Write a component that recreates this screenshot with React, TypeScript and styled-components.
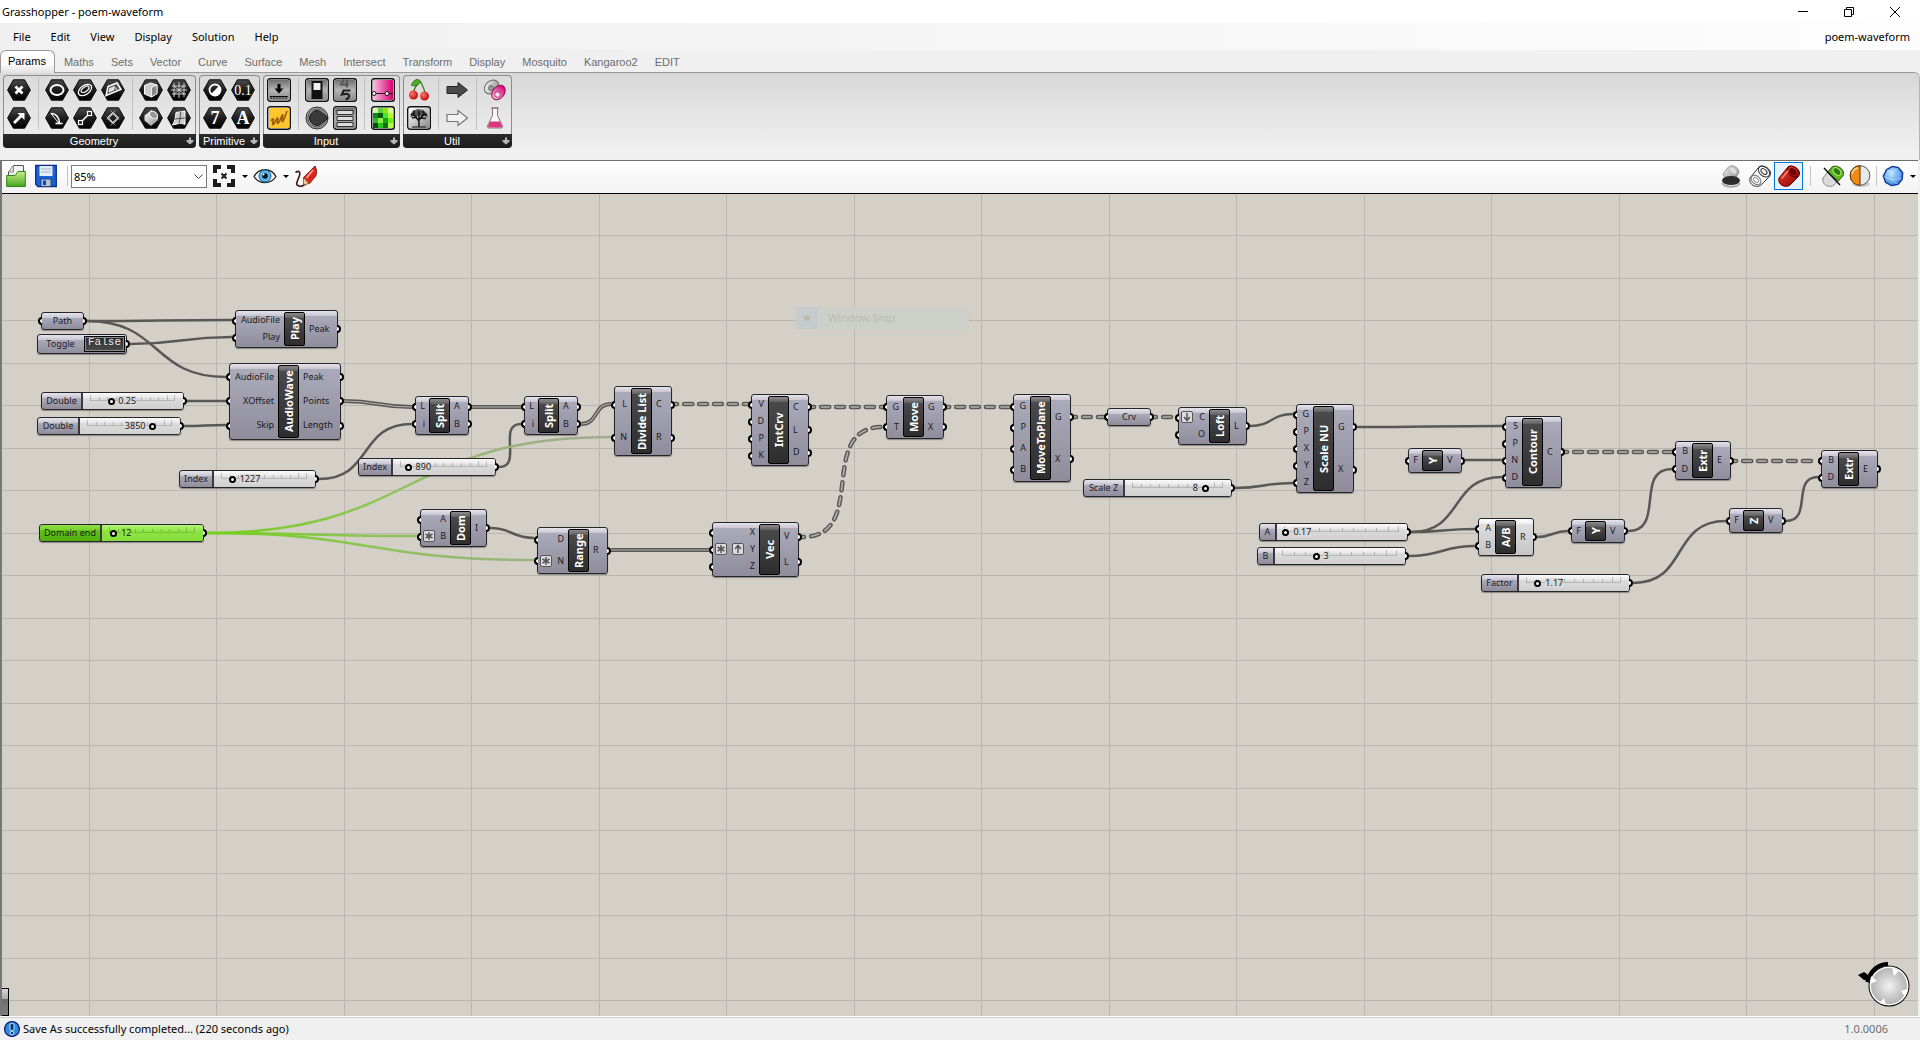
import React, { useState } from "react";
import styled, { createGlobalStyle, css } from "styled-components";

const UI = `"Noto Sans", "Open Sans", sans-serif`;
const RIBBON = `"Liberation Sans", Arial, sans-serif`;
const NODE = `"Noto Sans", "Open Sans", sans-serif`;

const GlobalStyle = createGlobalStyle`
  * { box-sizing: border-box; }
  body { margin: 0; background: #f0f0f0; font-family: ${UI}; font-size: 11px; color: #000; }
  button { font: inherit; color: inherit; background: none; border: 0; padding: 0; margin: 0; }
  svg { display: block; }
`;

const Window = styled.div`
  display: flex;
  flex-direction: column;
  height: 100vh;
  overflow: hidden;
`;

/* ---------- title bar and menu ---------- */

const TitleBar = styled.header`
  display: flex;
  align-items: center;
  height: 23px;
  flex: none;
  padding: 0 2px;
  background: #fff;
`;
const Title = styled.h1`
  flex: 1;
  margin: 0;
  font-size: 11px;
  line-height: 20px;
  font-weight: 400;
`;
const WindowButton = styled.button`
  display: grid;
  place-items: center;
  width: 46px;
  height: 20px;
`;
const MenuBar = styled.nav`
  display: flex;
  align-items: center;
  height: 27px;
  flex: none;
  padding: 0 10px 0 3px;
  background: linear-gradient(90deg, #f0f0f0, #f4f4f4 40%, #fdfdfd);
`;
const MenuItem = styled.button`
  padding: 0 10px;
  line-height: 20px;
`;
const DocumentName = styled.button`
  margin-left: auto;
  line-height: 20px;
`;

/* ---------- ribbon ---------- */

const Tabs = styled.div`
  display: flex;
  gap: 1px;
  height: 23px;
  flex: none;
  position: relative;
  z-index: 1;
  font-family: ${RIBBON};
`;
const Tab = styled.button<{ $active?: boolean }>`
  padding: 1px 8px 0;
  line-height: 22px;
  color: #6c6c6c;
  ${(p) =>
    p.$active &&
    css`
      padding: 0 8px 2px 7px;
      line-height: 20px;
      color: #000;
      background: linear-gradient(#fff, #fafafa 60%, #e2e2e2);
      border: 1px solid #9b9b9b;
      border-bottom: 0;
      border-radius: 6px 6px 0 0;
    `}
`;
const Ribbon = styled.div`
  display: flex;
  align-items: flex-start;
  gap: 3px;
  height: 88px;
  flex: none;
  margin-top: -1px;
  padding: 2px 3px 0;
  border-top: 1px solid #999;
  border-right: 1px solid #b4b4b4;
  border-radius: 0 6px 0 0;
  background: linear-gradient(#d8d8d8, #f0f0f0 90%);
`;
const Group = styled.section`
  display: flex;
  flex-direction: column;
  border: 1px solid #8c8c8c;
  border-bottom: 0;
  border-radius: 4px;
  background: linear-gradient(#dadada, #efefef);
`;
const Sections = styled.div`
  display: flex;
  padding: 2px 4px 4px 3px;
`;
const Section = styled.div<{ $cols: number }>`
  display: grid;
  grid-template-columns: repeat(${(p) => p.$cols}, 24px);
  gap: 4px;
  & + & {
    margin-left: 7px;
    padding-left: 6px;
    border-left: 1px solid #c0c0c0;
  }
`;
const ToolButton = styled.button`
  width: 24px;
  height: 24px;
`;
const GroupLabel = styled.div`
  display: flex;
  align-items: center;
  justify-content: center;
  height: 14px;
  margin: 0 -1px;
  padding: 0 0 0 1px;
  border-radius: 0 0 4px 4px;
  background: linear-gradient(#2c2c2c, #1c1c1c);
  color: #fff;
  font-family: ${RIBBON};
  font-size: 11px;
  line-height: 13px;
`;
const GroupName = styled.span`
  flex: 1;
  text-align: center;
`;

/* ---------- canvas toolbar ---------- */

const Editor = styled.main`
  display: flex;
  flex-direction: column;
  flex: 1;
  min-height: 0;
  margin-right: 2px;
  border-left: 2px solid #77777b;
  border-top: 1px solid #6e6e6e;
`;
const Toolbar = styled.div`
  display: flex;
  align-items: center;
  height: 33px;
  flex: none;
  padding: 0 0 2px 2px;
  border-bottom: 1px solid #000;
  background: linear-gradient(#fff, #f2f2f2);
`;
const BarButton = styled.button<{ $active?: boolean }>`
  display: grid;
  place-items: center;
  width: 29px;
  height: 28px;
  border: 1px solid ${(p) => (p.$active ? "#0078d7" : "transparent")};
  background: ${(p) => (p.$active ? "#e9f1fa" : "none")};
`;
const FileButton = styled(BarButton)`
  width: 24px;
  margin-right: 6px;
`;
const DropButton = styled(BarButton)`
  width: 26px;
`;
const Caret = styled.button`
  width: 9px;
  height: 20px;
  display: grid;
  place-items: center;
  margin: 0 1px 0 2px;
  &::after {
    content: "";
    border: 3px solid transparent;
    border-top-color: #000;
    border-bottom: 0;
  }
`;
const BarDivider = styled.span<{ $gap: number }>`
  width: 1px;
  height: 20px;
  margin: 0 ${(p) => p.$gap}px;
  background: #c4c4c4;
`;
const ZoomBox = styled.div`
  position: relative;
  width: 136px;
  margin-right: 2px;
`;
const ZoomSelect = styled.select`
  width: 100%;
  height: 23px;
  padding: 0 2px;
  appearance: none;
  border: 1px solid #7a7a7a;
  border-radius: 0;
  background: #fff;
  font-family: ${UI};
  font-size: 11px;
  color: #000;
`;
const ZoomArrow = styled.svg`
  position: absolute;
  right: 4px;
  top: 9px;
  pointer-events: none;
`;
const Spacer = styled.span`
  flex: 1;
`;

/* ---------- canvas ---------- */

const Canvas = styled.div`
  position: relative;
  flex: 1;
  overflow: hidden;
  background-color: #d4d0c8;
  background-image:
    linear-gradient(90deg, #bab7b0 1px, transparent 1px),
    linear-gradient(90deg, #bab7b0 1px, transparent 1px),
    linear-gradient(#bab7b0 1px, transparent 1px),
    linear-gradient(#bab7b0 1px, transparent 1px);
  background-size: 255px 100%, 255px 100%, 100% 85px, 100% 85px;
  background-position: 87px 0, 214px 0, 0 41px, 0 84px;
`;
/* The document plane, panned so that its origin lies above the toolbar. */
const Plane = styled.div`
  position: absolute;
  inset: -194px 0 0 -2px;
  font-family: ${NODE};
  font-size: 9px;
  line-height: 12px;
`;
const Wires = styled.svg`
  position: absolute;
  inset: 0;
  width: 100%;
  height: 100%;
`;

type Tone = "grey" | "white" | "green";
const tones: Record<Tone, string> = {
  grey: "linear-gradient(#e6e5ee 0, #c6c5d0 5px, #abaaba 5px, #8f8d9b 100%)",
  white: "linear-gradient(#ffffff 0, #ececec 5px, #dedede 5px, #c4c4c4 100%)",
  green: "linear-gradient(#8fe04a 0, #78d42c 5px, #62c318 5px, #4fb00c 100%)",
};

const NodeBox = styled.div<{ $x: number; $y: number; $w: number; $h: number; $tone?: Tone }>`
  position: absolute;
  left: ${(p) => p.$x}px;
  top: ${(p) => p.$y}px;
  width: ${(p) => p.$w}px;
  height: ${(p) => p.$h}px;
  display: flex;
  border: 1px solid #26262a;
  border-radius: 3px;
  background: ${(p) => tones[p.$tone ?? "grey"]};
  box-shadow: 0 1px 1px rgba(0, 0, 0, 0.35);
  color: #1a1a1e;
`;
const Ports = styled.ul<{ $w?: number; $out?: boolean }>`
  ${(p) => (p.$w ? `width: ${p.$w}px;` : "flex: 1;")}
  display: flex;
  flex-direction: column;
  margin: 0;
  padding: 1px 0;
  list-style: none;
`;
const Port = styled.li<{ $out?: boolean }>`
  position: relative;
  flex: 1;
  display: flex;
  align-items: center;
  justify-content: ${(p) => (p.$out ? "flex-start" : "flex-end")};
  padding: 0 4px 1px;
  white-space: nowrap;
`;
const Badges = styled.span`
  flex: 1;
  display: flex;
  gap: 5px;
  margin-left: -2px;
`;
const Badge = styled.span`
  display: grid;
  place-items: center;
  width: 12px;
  height: 12px;
  border: 1px solid #55555a;
  border-radius: 2px;
  background: #dcdcdc;
`;
const Grip = styled.i<{ $side: "left" | "right" }>`
  position: absolute;
  top: 50%;
  margin-top: -4px;
  width: 4px;
  height: 8px;
  border: 2px solid #000;
  background: #fff;
  ${(p) =>
    p.$side === "left"
      ? "left: -4px; border-right: 0; border-radius: 4px 0 0 4px;"
      : "right: -4px; border-left: 0; border-radius: 0 4px 4px 0;"}
`;
const NodeTitle = styled.strong`
  width: 21px;
  margin: 1px 0;
  border: 1px solid #000;
  border-radius: 2px;
  display: flex;
  align-items: center;
  justify-content: center;
  writing-mode: vertical-rl;
  transform: rotate(180deg);
  background: linear-gradient(0deg, #8c8c8c 0, #5e5e5e 5px, #4a4a4a 5px, #2d2d2d 100%);
  color: #fff;
  font-size: 11px;
  line-height: 16px;
  white-space: nowrap;
`;
const ParamName = styled.span`
  flex: 1;
  align-self: center;
  text-align: center;
  line-height: 16px;
`;

const SliderName = styled.label<{ $w: number }>`
  width: ${(p) => p.$w}px;
  flex: none;
  border-right: 2px solid #3a3a3e;
  text-align: center;
  line-height: 16px;
  white-space: nowrap;
`;
const SliderBody = styled.div<{ $green?: boolean }>`
  flex: 1;
  padding: 0 8px 0 7px;
  border-radius: 0 2px 2px 0;
  --face: ${(p) => (p.$green ? "#8ae340" : "#d8d8d8")};
  background: ${(p) =>
    p.$green
      ? "linear-gradient(#b6f57c 0, #97ea4e 5px, #8fe645 5px, #84dd3a 100%)"
      : "linear-gradient(#fbfbfb 0, #e6e6e6 5px, #dcdcdc 5px, #d0d0d0 100%)"};
`;
const SliderTrack = styled.div`
  position: relative;
  height: 16px;
`;
const Ticks = styled.div`
  display: grid;
  grid-template-columns: repeat(10, 1fr);
  align-items: end;
  height: 8px;
  border-bottom: 1px solid rgba(0, 0, 0, 0.16);
`;
const Tick = styled.i`
  height: 3px;
  border-left: 1px solid rgba(0, 0, 0, 0.2);
  &:first-child {
    height: 5px;
  }
  &:last-child {
    height: 5px;
    border-right: 1px solid rgba(0, 0, 0, 0.2);
  }
`;
const Range = styled.input`
  position: absolute;
  left: -4px;
  top: 0;
  width: calc(100% + 8px);
  height: 16px;
  margin: 0;
  appearance: none;
  background: none;
  &::-webkit-slider-thumb {
    appearance: none;
    width: 7px;
    height: 7px;
    border: 2px solid #000;
    border-radius: 50%;
    background: #fff;
  }
`;
const Value = styled.output<{ $before?: boolean }>`
  position: absolute;
  top: 3px;
  line-height: 10px;
  margin: 0 7px;
  background: var(--face);
  transform: ${(p) => (p.$before ? "translateX(calc(-100% - 14px))" : "none")};
`;

const ToggleButton = styled.button`
  width: 41px;
  margin: 1px;
  border: 1px solid #000;
  outline: 1px solid #8b8b90;
  outline-offset: -2px;
  background: linear-gradient(#2a2a2a, #4c4c4c);
  color: #e8e8e8;
  font-family: "Liberation Mono", monospace;
  font-size: 11px;
  line-height: 10px;
  padding-bottom: 4px;
`;

const SnipGhost = styled.div`
  position: absolute;
  left: 796px;
  top: 307px;
  width: 173px;
  height: 22px;
  display: flex;
  align-items: center;
  background: #cdd0c9;
  color: #bdbab2;
  font-family: ${UI};
  font-size: 11px;
`;
const SnipIcon = styled.span`
  display: grid;
  place-items: center;
  width: 22px;
  height: 22px;
  margin-right: 10px;
  background: #c6ccce;
  &::after {
    content: "";
    width: 6px;
    height: 6px;
    border-radius: 50%;
    background: #bdbcae;
  }
`;
const Compass = styled.svg`
  position: absolute;
  right: 8px;
  bottom: 8px;
`;
const SideHandle = styled.button`
  position: absolute;
  left: 0;
  bottom: 0;
  width: 7px;
  height: 28px;
  border: 1px solid #000;
  border-left: 0;
  background: linear-gradient(#d6d6d6, #a8a8a8 40%, #6c6c6c 40%, #808080);
`;

const StatusBar = styled.footer`
  display: flex;
  align-items: center;
  gap: 3px;
  height: 24px;
  flex: none;
  padding: 2px 32px 2px 4px;
  border-top: 1px solid #fff;
  box-shadow: inset 0 1px 0 #d0d0d0;
  line-height: 18px;
`;
const Version = styled.span`
  margin-left: auto;
  color: #6d6d6d;
`;

/* ---------- icons ---------- */

const Defs = () => (
  <svg width="0" height="0" style={{ position: "absolute" }} aria-hidden="true">
    <defs>
      <linearGradient id="hex" x1="0" y1="0" x2="0" y2="1">
        <stop offset="0" stopColor="#4a4a4a" />
        <stop offset="0.5" stopColor="#1d1d1d" />
        <stop offset="1" stopColor="#000" />
      </linearGradient>
      <linearGradient id="steel" x1="0" y1="0" x2="0" y2="1">
        <stop offset="0" stopColor="#6f6f6f" />
        <stop offset="0.5" stopColor="#b5b5b5" />
        <stop offset="1" stopColor="#8a8a8a" />
      </linearGradient>
      <linearGradient id="pale" x1="0" y1="0" x2="1" y2="1">
        <stop offset="0" stopColor="#fff" />
        <stop offset="1" stopColor="#8a8a8a" />
      </linearGradient>
      <linearGradient id="pink" x1="0" y1="0" x2="1" y2="0">
        <stop offset="0" stopColor="#fcc0e2" />
        <stop offset="1" stopColor="#d4006f" />
      </linearGradient>
      <linearGradient id="red" x1="0" y1="0" x2="1" y2="1">
        <stop offset="0" stopColor="#f04030" />
        <stop offset="1" stopColor="#8c0000" />
      </linearGradient>
      <linearGradient id="leaf" x1="0" y1="0" x2="0" y2="1">
        <stop offset="0" stopColor="#c8f08c" />
        <stop offset="1" stopColor="#47a51c" />
      </linearGradient>
      <radialGradient id="sky" cx="0.4" cy="0.35" r="0.7">
        <stop offset="0" stopColor="#bfe6ff" />
        <stop offset="1" stopColor="#3a86dc" />
      </radialGradient>
      <radialGradient id="knob">
        <stop offset="0" stopColor="#f2f2f2" />
        <stop offset="1" stopColor="#b4b4b4" />
      </radialGradient>
      <radialGradient id="cherry" cx="0.35" cy="0.35" r="0.7">
        <stop offset="0" stopColor="#ff7a6a" />
        <stop offset="1" stopColor="#c00808" />
      </radialGradient>
    </defs>
  </svg>
);

const Hex = ({ children }: { children: React.ReactNode }) => (
  <svg width="24" height="24" viewBox="0 0 24 24" fill="none" stroke="#fff" strokeWidth="1.6">
    <path d="M.6 12 6.4 1.8h11.2L23.4 12l-5.8 10.2H6.4z" fill="url(#hex)" stroke="#0a0a0a" strokeWidth="1" />
    {children}
  </svg>
);
const Tile = ({ children, fill = "url(#steel)" }: { children: React.ReactNode; fill?: string }) => (
  <svg width="24" height="24" viewBox="0 0 24 24" fill="none" stroke="#111">
    <rect x="0.7" y="0.7" width="22.6" height="22.6" rx="2.5" fill="#fff" strokeWidth="1.4" />
    <rect x="2" y="2" width="20" height="20" rx="1" fill={fill} stroke="none" />
    {children}
  </svg>
);
const Plain = ({ children }: { children: React.ReactNode }) => (
  <svg width="24" height="24" viewBox="0 0 24 24" fill="none">
    {children}
  </svg>
);
const glyph = (size: number) => ({
  fill: "#fff",
  stroke: "none",
  fontFamily: `"Liberation Serif", serif`,
  fontWeight: 700,
  fontSize: size,
  textAnchor: "middle" as const,
});

const arrow = "M2 8.500h11V4.500l9.500 7.500-9.500 7.500v-4H2z";
const pixels = ["#d8f7a0", "#5fd03c", "#8be800", "#d5ff9a", "#0a8c18", "#005b10", "#49e42a", "#b9f73e", "#2fb52f", "#8bf04c", "#1e9e1e", "#6cf010", "#064f10", "#27c61f", "#0c7014", "#b4ff50"];

type Tool = { name: string; icon: React.ReactNode };
type GroupSpec = { name: string; sections: { cols: number; tools: Tool[] }[] };

const groups: GroupSpec[] = [
  {
    name: "Geometry",
    sections: [
      {
        cols: 1,
        tools: [
          { name: "Point", icon: <Hex><path d="m8.500 8.500 7 7m0-7-7 7" strokeWidth="2.8" /></Hex> },
          { name: "Vector", icon: <Hex><path d="m7 17 7-7" strokeWidth="2.8" /><path d="M10.500 7H17.500v7z" fill="#fff" stroke="none" /></Hex> },
        ],
      },
      {
        cols: 3,
        tools: [
          { name: "Circle", icon: <Hex><ellipse cx="12" cy="12" rx="6.500" ry="5" strokeWidth="2" /></Hex> },
          { name: "Curve", icon: <Hex><ellipse cx="12" cy="12" rx="7.500" ry="4.500" transform="rotate(-35 12 12)" strokeWidth="1.200" /><ellipse cx="12.500" cy="11.500" rx="4.500" ry="2.300" transform="rotate(-35 12 12)" strokeWidth="1.200" /></Hex> },
          { name: "Plane", icon: <Hex><path d="m7 8.500 9-3.500 4 6.500-15 6z" fill="#555" strokeWidth="1.500" /><path d="m8.500 10.500 4.500-1.800v3.300l-5 2z" fill="#ddd" strokeWidth="0.600" /><path d="m13 8.500 3.500 4" strokeWidth="1" /></Hex> },
          { name: "Arc", icon: <Hex><path d="M6 7.500c5 0 8.500 4 8.500 10" /><path d="M6 7.500 14.500 18" strokeWidth="1" /><path d="M10.500 17.500h7" /></Hex> },
          { name: "Line", icon: <Hex><path d="m8 16 8-8" /><rect x="5.500" y="14.500" width="4" height="4" fill="#222" strokeWidth="1.200" /><rect x="14.500" y="5.500" width="4" height="4" fill="#222" strokeWidth="1.200" /></Hex> },
          { name: "Rectangle", icon: <Hex><path d="m12 7 5 5-5 5-5-5z" /><path d="m5.500 10.500 9 9m-5-15 9 9m-4-9-9 9m13-3-9 9" stroke="#aaa" strokeWidth="0.800" /></Hex> },
        ],
      },
      {
        cols: 2,
        tools: [
          { name: "Box", icon: <Hex><path d="m5.500 7.500 6-2.500 6.500 2v8.500l-5.500 3.500-7-3z" fill="#ccc" strokeWidth="1" /><path d="M12.500 9.500V19l5.500-3.500V7z" fill="#888" stroke="#fff" strokeWidth="0.800" /></Hex> },
          { name: "Mesh", icon: <Hex><path d="M7 5v14m5-15v16m5-15v14M5 8h14M4 12h16M5 16h14M7 8l10 8M7 16 17 8" strokeWidth="0.900" stroke="#ddd" /></Hex> },
          { name: "Brep", icon: <Hex><path d="m5.500 9.500 7-5.500 6.500 5v5l-7 6-6.500-5.500z" fill="url(#pale)" stroke="none" /><ellipse cx="14.500" cy="9" rx="4.500" ry="3.200" transform="rotate(35 14.500 9)" fill="#999" strokeWidth="1" /></Hex> },
          { name: "Surface", icon: <Hex><path d="M9 6.500 18 5v13.500L14 17l-8.500 2c2-3 3-7 3.500-12.500z" fill="#ccc" strokeWidth="1" /><path d="M13.500 5.500c0 5-.5 8-1.500 12M7.500 13 18 12" stroke="#333" strokeWidth="0.800" /></Hex> },
        ],
      },
    ],
  },
  {
    name: "Primitive",
    sections: [
      {
        cols: 2,
        tools: [
          { name: "Boolean", icon: <Hex><circle cx="12" cy="12" r="5.500" strokeWidth="1.800" /><path d="M8 16 16 8a5.500 5.500 0 0 1-8 8z" fill="#fff" stroke="none" /></Hex> },
          { name: "Number", icon: <Hex><text x="12" y="17" {...glyph(14)} fontWeight={400}>0.1</text></Hex> },
          { name: "Integer", icon: <Hex><text x="12" y="18" {...glyph(18)}>7</text></Hex> },
          { name: "Text", icon: <Hex><text x="12" y="18" {...glyph(18)}>A</text></Hex> },
        ],
      },
    ],
  },
  {
    name: "Input",
    sections: [
      {
        cols: 1,
        tools: [
          { name: "Number Slider", icon: <Tile><path d="M12 6v5" stroke="#000" strokeWidth="3" /><path d="M7.500 10.500h9L12 15.500z" fill="#000" stroke="none" /><path d="M3 18.500h18M4 21v-3m3 3v-3m3 3v-3m3 3v-3m3 3v-3m3 3v-3" /></Tile> },
          { name: "Panel", icon: <Tile fill="#ffc52e"><path d="M4 15c2-3 3-3 2 1-1 5 1 2 3-2 1.500-3 2.500-3 1.500 1-1 4 1 3 3-2s3-6 2-1 0 5 2 0l2.500-7" stroke="#96590a" strokeWidth="1.600" /></Tile> },
        ],
      },
      {
        cols: 2,
        tools: [
          { name: "Boolean Toggle", icon: <Tile><rect x="7" y="3.500" width="10" height="17" fill="#111" /><rect x="8.500" y="5" width="7" height="7" fill="#eee" stroke="none" /></Tile> },
          { name: "Digit Scroller", icon: <Tile><path d="M11 1.500 8 6.500h7.500M14 1.500v8" stroke="#555" strokeWidth="1.800" /><path d="M17.500 12.500h-7l-1.500 4c5-1.500 7.500-.5 7 2-.3 1.500-1.500 2.500-3.500 3" stroke="#222" strokeWidth="2.200" /></Tile> },
          { name: "Control Knob", icon: <Plain><circle cx="12" cy="12" r="11" fill="#9a9a9a" stroke="#333" /><circle cx="12" cy="12" r="9" fill="#c9c9c9" stroke="#555" /><path d="M18 7.500 23 12l-5 4.500A7.500 7.500 0 1 1 18 7.500z" fill="#3a3a3a" stroke="#111" /></Plain> },
          { name: "Value List", icon: <Tile><path d="M4 4.500h16v4H4zm0 6h16v4H4zm0 6h16v4H4z" fill="#ddd" stroke="#333" /></Tile> },
        ],
      },
      {
        cols: 1,
        tools: [
          { name: "Gradient", icon: <Tile fill="url(#pink)"><path d="M2 15.500h20" stroke="#3a0020" /><circle cx="3" cy="15.500" r="2" fill="#fff" /><circle cx="16" cy="15.500" r="2" fill="#fff" /></Tile> },
          {
            name: "Image Sampler",
            icon: (
              <Tile>
                {pixels.map((c, i) => (
                  <rect key={i} x={2 + (i % 4) * 5} y={2 + Math.floor(i / 4) * 5} width="5" height="5" fill={c} stroke="none" />
                ))}
              </Tile>
            ),
          },
        ],
      },
    ],
  },
  {
    name: "Util",
    sections: [
      {
        cols: 1,
        tools: [
          { name: "Cherry Picker", icon: <Plain><path d="M13.500 3.500C9 7 7 10 6.500 15M13.500 3.500c2 4 3.500 7 4.500 11" stroke="#3c7a16" strokeWidth="1.300" /><path d="M13.500 3.500C12 0 6 1 4.500 7.500c4 1 8-1 9-4z" fill="#4db01e" stroke="#1f6b0d" strokeWidth="0.800" /><circle cx="6.500" cy="17" r="4.500" fill="url(#cherry)" /><circle cx="17.500" cy="18" r="4.500" fill="url(#cherry)" /></Plain> },
          { name: "Param Viewer", icon: <Tile fill="url(#pale)"><path d="M12 21v-8M12 15 7 9M12 14l5-6M12 13V5M7 9 4 8m3 1V5m10 3 3 1m-3-1-1-3M10 11l-5 1m8 0 6 .5" strokeWidth="1.500" /><path d="M3.500 8.500 6 4.500l5-1.500 5 1 4 3.500.5 4-3-1.500-3 1-2-2-3 2-3-1-3 1.500z" fill="#111" fillOpacity="0.650" stroke="none" /><path d="M5 21h14" /></Tile> },
        ],
      },
      {
        cols: 1,
        tools: [
          { name: "Data Input", icon: <Plain><path d={arrow} fill="#4a4a4a" stroke="#222" /></Plain> },
          { name: "Data Output", icon: <Plain><path d={arrow} fill="#f2f2f2" stroke="#777" strokeWidth="1.200" /></Plain> },
        ],
      },
      {
        cols: 1,
        tools: [
          { name: "Galapagos", icon: <Plain><ellipse cx="8.500" cy="9" rx="8" ry="6" transform="rotate(-40 8.500 9)" fill="url(#pale)" stroke="#666" /><circle cx="8" cy="10" r="2.500" fill="#999" stroke="#666" strokeWidth="0.800" /><ellipse cx="15.500" cy="14.500" rx="8" ry="5.800" transform="rotate(-50 15.500 14.500)" fill="url(#pink)" stroke="#8f0f50" /><circle cx="14.500" cy="16.500" r="2.800" fill="#ffd6ea" stroke="#a01860" strokeWidth="0.800" /></Plain> },
          { name: "Fitness", icon: <Plain><path d="M9.500 2v7.500L4.500 20c-.5 1.500.5 2 2 2h11c1.500 0 2.500-.5 2-2l-5-10.500V2" fill="#fff" fillOpacity="0.700" stroke="#8c6c7c" /><path d="M7 15.500h10l2 5c0 1-.5 1-1.500 1h-11c-1 0-1.500 0-1.500-1z" fill="#d8377f" /><path d="M8.500 2h7" stroke="#8c6c7c" strokeWidth="1.500" /></Plain> },
        ],
      },
    ],
  },
];

const OpenIcon = () => (
  <svg width="20" height="24" viewBox="0 0 20 24">
    <path d="m2.500 8 5-6.500h10V17h-15z" fill="#f4f4f4" stroke="#555" />
    <path d="M2.500 8h5V2" fill="#ddd" stroke="#777" strokeWidth="0.800" />
    <path d="M.7 11.500H9l3-4h7.300v15H.7z" fill="url(#leaf)" stroke="#2f8412" />
  </svg>
);
const SaveIcon = () => (
  <svg width="22" height="24" viewBox="0 0 22 24">
    <path d="M.7 1.500h20.600v21H3l-2.300-2.300z" fill="#1c62d4" stroke="#0a2f86" strokeWidth="1.300" />
    <path d="M4.500 2h13v10h-13z" fill="#e4ecf6" />
    <path d="M6 5h10M6 8h10" stroke="#9fb0c4" />
    <path d="M6 15h10v7.500H6z" fill="#b7c2d2" stroke="#0a2f86" strokeWidth="0.800" />
    <path d="M8 16.500h3v4.500H8z" fill="#0d3fae" />
  </svg>
);
const ExtentsIcon = () => (
  <svg width="24" height="24" viewBox="0 0 24 24" stroke="#1c1c1c" fill="none">
    <path d="M3 9V3h6m6 0h6v6m0 6v6h-6m-6 0H3v-6" strokeWidth="4" />
    <path d="m9.500 9.500 5 5m0-5-5 5" strokeWidth="2" />
  </svg>
);
const EyeIcon = () => (
  <svg width="24" height="24" viewBox="0 0 24 24">
    <path d="M1 12.500C6 3.500 18 3.500 23 12.500 18 20.500 6 20.500 1 12.500z" fill="#fff" stroke="#222" strokeWidth="1.300" />
    <circle cx="12" cy="12" r="6" fill="#5db7ea" stroke="#145a8c" />
    <circle cx="12" cy="12" r="2.800" fill="#06121c" />
    <circle cx="10.500" cy="10.500" r="1" fill="#fff" />
  </svg>
);
const BrushIcon = () => (
  <svg width="24" height="24" viewBox="0 0 24 24">
    <path d="M1.500 8.500C5 6 7 8 5 13s-4 8 0 9 7-2 8-5" fill="none" stroke="#4a1410" strokeWidth="1.600" />
    <path d="M21 2c2 3 2 8 .5 10.500L15 20l-6-6z" fill="#d8281c" stroke="#6f0b06" strokeWidth="0.800" />
    <path d="m9.500 13.500 5.500 6-5.500 1.500z" fill="#f2c79a" stroke="#8c4a20" strokeWidth="0.800" />
    <path d="m19 6-6.500 8" stroke="#ff9c90" strokeWidth="1.800" />
  </svg>
);
const tube = "M2 14 10.500 3.500C13 .5 22 3 22.500 9c0 2-.5 3-2 4.500L13 21c-4 3.500-13 0-11-7z";
const TubeIcon = ({ body, hole, line }: { body: string; hole: string; line: string }) => (
  <svg width="24" height="24" viewBox="0 0 24 24" stroke={line}>
    <path d={tube} fill={body} />
    <ellipse cx="16" cy="7.500" rx="6.500" ry="4.500" transform="rotate(42 16 7.500)" fill={body} />
    <ellipse cx="16" cy="7.500" rx="3.500" ry="2.300" transform="rotate(42 16 7.500)" fill={hole} />
    <path d="m5 14 6-7" stroke="#ff8a7a" strokeWidth="1.500" strokeLinecap="round" />
  </svg>
);
const NoPreviewIcon = () => (
  <svg width="24" height="24" viewBox="0 0 24 24">
    <path d="M4 10 9.500 3C12 0 20 3 20 8l-3 6H6z" fill="url(#pale)" stroke="#999" />
    <ellipse cx="14" cy="6.500" rx="4.500" ry="3" transform="rotate(40 14 6.500)" fill="#ddd" stroke="#aaa" strokeWidth="0.800" />
    <path d="M3 19c3 5 15 5 18 0" fill="none" stroke="#aaa" strokeWidth="2" />
    <ellipse cx="12" cy="16.500" rx="9" ry="4.500" fill="#2c2c2c" />
  </svg>
);
const WireTubeIcon = () => (
  <svg width="24" height="24" viewBox="0 0 24 24" stroke="#333" fill="#fafafa">
    <path d={tube} />
    <ellipse cx="16" cy="7.500" rx="6.500" ry="4.500" transform="rotate(42 16 7.500)" fill="none" />
    <ellipse cx="16" cy="7.500" rx="3.500" ry="2.200" transform="rotate(42 16 7.500)" fill="none" />
    <ellipse cx="8" cy="16" rx="5.500" ry="4" transform="rotate(42 8 16)" fill="none" stroke="#777" />
    <ellipse cx="8" cy="16" rx="3" ry="2" transform="rotate(42 8 16)" fill="none" stroke="#999" />
  </svg>
);
const SelectedTubeIcon = () => (
  <svg width="24" height="24" viewBox="0 0 24 24">
    <path d={tube} fill="#dcdcdc" stroke="#888" />
    <path d="M6.500 8.500 10.500 3.500C13 .5 22 3 22.500 9c0 2-.5 3-2 4.500L17.500 17z" fill="#5cb81e" stroke="#2c6b0a" />
    <ellipse cx="16" cy="7.500" rx="4.500" ry="3" transform="rotate(42 16 7.500)" fill="#2f7a0c" stroke="#b5ee7c" />
    <path d="m3 4 16 17" stroke="#111" strokeWidth="1.500" />
  </svg>
);
const HalfSphereIcon = () => (
  <svg width="24" height="24" viewBox="0 0 24 24">
    <ellipse cx="13" cy="20" rx="9" ry="3" fill="#ccc" />
    <circle cx="12" cy="11.500" r="9.800" fill="#e8e8e8" stroke="#555" />
    <path d="M12 1.700a9.800 9.800 0 0 0 0 19.600z" fill="#f08a12" stroke="#5c3408" />
    <path d="M10 4a8 8 0 0 0-6 6" stroke="#ffd79a" strokeWidth="1.500" fill="none" />
  </svg>
);
const MeshSphereIcon = () => (
  <svg width="22" height="22" viewBox="0 0 24 24">
    <path d="m5 5 6.500-3.500L18 3l4.500 5.500-.5 7-4.500 5.500-7 1.500L4 19l-2.500-7z" fill="url(#sky)" stroke="#12369c" strokeWidth="1.600" strokeLinejoin="round" />
    <path d="M5.500 5.500 11 8l6.500-4.500M11 8l-1 8-8-3m8 3 7 4.500M10 16l11.500-1" stroke="#d5efff" strokeWidth="0.500" fill="none" />
  </svg>
);
const StatusIcon = () => (
  <svg width="16" height="16" viewBox="0 0 16 16">
    <circle cx="8" cy="8" r="7.400" fill="#2e8fd8" stroke="#131f7c" strokeWidth="1.300" />
    <rect x="6" y="2.200" width="4" height="7.300" rx="1.800" fill="#0c2f84" stroke="#c9f4ff" strokeWidth="0.900" />
    <circle cx="8" cy="12" r="1.800" fill="#0c2f84" stroke="#c9f4ff" strokeWidth="0.900" />
  </svg>
);
const LabelArrow = () => (
  <svg width="12" height="12" viewBox="0 0 12 12">
    <path d="M5 2.500h2V5h2.500v1.500L6 9.500 2.500 6.500V5H5z" fill="#b8b8b8" />
  </svg>
);

/* ---------- document ---------- */

type BadgeKind = "star" | "up" | "down";
type Input = string | { name: string; badges: BadgeKind[] };
type Component = { x: number; y: number; w: number; h: number; left: number; title: string; ins: Input[]; outs: string[]; tone?: Tone };

const components: Component[] = [
  { x: 235, y: 310, w: 103, h: 38, left: 48, title: "Play", ins: ["AudioFile", "Play"], outs: ["Peak"] },
  { x: 229, y: 363, w: 112, h: 77, left: 48, title: "AudioWave", ins: ["AudioFile", "XOffset", "Skip"], outs: ["Peak", "Points", "Length"] },
  { x: 415, y: 396, w: 54, h: 39, left: 13, title: "Split", ins: ["L", "i"], outs: ["A", "B"] },
  { x: 524, y: 396, w: 54, h: 39, left: 13, title: "Split", ins: ["L", "i"], outs: ["A", "B"] },
  { x: 614, y: 386, w: 58, h: 70, left: 16, title: "Divide List", ins: ["L", "N"], outs: ["C", "R"] },
  { x: 420, y: 509, w: 67, h: 38, left: 29, title: "Dom", ins: ["A", { name: "B", badges: ["star"] }], outs: ["I"] },
  { x: 537, y: 527, w: 71, h: 47, left: 30, title: "Range", ins: ["D", { name: "N", badges: ["star"] }], outs: ["R"] },
  { x: 751, y: 394, w: 58, h: 72, left: 16, title: "IntCrv", ins: ["V", "D", "P", "K"], outs: ["C", "L", "D"] },
  { x: 712, y: 522, w: 87, h: 55, left: 46, title: "Vec", ins: ["X", { name: "Y", badges: ["star", "up"] }, "Z"], outs: ["V", "L"] },
  { x: 886, y: 395, w: 58, h: 44, left: 16, title: "Move", ins: ["G", "T"], outs: ["G", "X"] },
  { x: 1013, y: 394, w: 58, h: 88, left: 16, title: "MoveToPlane", ins: ["G", "P", "A", "B"], outs: ["G", "X"] },
  { x: 1178, y: 407, w: 69, h: 38, left: 30, title: "Loft", ins: [{ name: "C", badges: ["down"] }, "O"], outs: ["L"] },
  { x: 1296, y: 404, w: 58, h: 89, left: 16, title: "Scale NU", ins: ["G", "P", "X", "Y", "Z"], outs: ["G", "X"] },
  { x: 1408, y: 448, w: 54, h: 25, left: 13, title: "Y", ins: ["F"], outs: ["V"] },
  { x: 1505, y: 416, w: 57, h: 72, left: 16, title: "Contour", ins: ["S", "P", "N", "D"], outs: ["C"] },
  { x: 1478, y: 518, w: 56, h: 38, left: 16, title: "A/B", ins: ["A", "B"], outs: ["R"], tone: "white" },
  { x: 1571, y: 519, w: 54, h: 24, left: 13, title: "Y", ins: ["F"], outs: ["V"] },
  { x: 1675, y: 441, w: 56, h: 39, left: 16, title: "Extr", ins: ["B", "D"], outs: ["E"] },
  { x: 1821, y: 450, w: 57, h: 38, left: 16, title: "Extr", ins: ["B", "D"], outs: ["E"] },
  { x: 1729, y: 508, w: 54, h: 25, left: 13, title: "Z", ins: ["F"], outs: ["V"] },
];

const params = [
  { x: 41, y: 312, w: 43, name: "Path" },
  { x: 1107, y: 408, w: 44, name: "Crv" },
];

type SliderSpec = { x: number; y: number; w: number; label: number; name: string; value: string; max: number; green?: boolean };
const sliders: SliderSpec[] = [
  { x: 41, y: 392, w: 143, label: 41, name: "Double", value: "0.25", max: 1 },
  { x: 37, y: 417, w: 144, label: 42, name: "Double", value: "3850", max: 5000 },
  { x: 179, y: 470, w: 137, label: 34, name: "Index", value: "1227", max: 9000 },
  { x: 358, y: 458, w: 138, label: 34, name: "Index", value: "890", max: 9000 },
  { x: 39, y: 524, w: 165, label: 62, name: "Domain end", value: "12", max: 200, green: true },
  { x: 1083, y: 479, w: 149, label: 41, name: "Scale Z", value: "8", max: 10 },
  { x: 1259, y: 523, w: 149, label: 17, name: "A", value: "0.17", max: 8 },
  { x: 1257, y: 547, w: 149, label: 17, name: "B", value: "3", max: 10 },
  { x: 1481, y: 574, w: 149, label: 37, name: "Factor", value: "1.17", max: 9 },
];

type Line = [number, number, number, number];
const itemWires: Line[] = [
  [87, 321, 232, 320], [87, 321, 226, 377], [130, 344, 232, 337], [187, 401, 226, 401], [184, 426, 226, 425],
  [319, 479, 412, 424], [499, 467, 521, 424], [490, 528, 534, 538], [1250, 426, 1293, 414], [1235, 488, 1293, 483],
  [1357, 427, 1502, 426], [1465, 460, 1502, 460], [1411, 532, 1502, 477], [1411, 532, 1475, 529], [1409, 556, 1475, 546],
  [1537, 537, 1568, 531], [1628, 531, 1672, 469], [1633, 583, 1726, 521], [1786, 521, 1818, 477],
];
const listWires: Line[] = [[344, 401, 412, 407], [472, 407, 521, 407], [581, 424, 611, 404], [611, 550, 709, 550]];
const treeWires: Line[] = [
  [675, 404, 748, 404], [812, 407, 883, 407], [802, 537, 883, 427], [947, 407, 1010, 407],
  [1074, 417, 1104, 417], [1154, 417, 1175, 417], [1565, 452, 1672, 452], [1734, 461, 1818, 461],
];
const selectedWires: Line[] = [[207, 533, 611, 437], [207, 533, 417, 536], [207, 533, 534, 560]];

/* The pull of each handle is half of the distance between the two grips. */
const curve = ([x1, y1, x2, y2]: Line) => {
  const pull = Math.hypot(x2 - x1, y2 - y1) / 2;
  return `M${x1} ${y1}C${x1 + pull} ${y1} ${x2 - pull} ${y2} ${x2} ${y2}`;
};

const badgePaths: Record<BadgeKind, string> = {
  star: "M5 1v8M1.500 3l7 4M8.500 3l-7 4",
  up: "M5 9V1.500M2 5l3-3.500L8 5",
  down: "M5 1v7.500M2 5l3 3.500L8 5",
};

const ComponentNode = ({ c }: { c: Component }) => (
  <NodeBox $x={c.x} $y={c.y} $w={c.w} $h={c.h} $tone={c.tone}>
    <Ports $w={c.left}>
      {c.ins.map((p, i) => {
        const port = typeof p === "string" ? { name: p, badges: [] as BadgeKind[] } : p;
        return (
          <Port key={i}>
            <Grip $side="left" />
            {port.badges.length > 0 && (
              <Badges>
                {port.badges.map((b) => (
                  <Badge key={b}>
                    <svg width="10" height="10" viewBox="0 0 10 10" fill="none" stroke="#55555a" strokeWidth="1.500">
                      <path d={badgePaths[b]} />
                    </svg>
                  </Badge>
                ))}
              </Badges>
            )}
            {port.name}
          </Port>
        );
      })}
    </Ports>
    <NodeTitle>{c.title}</NodeTitle>
    <Ports>
      {c.outs.map((name) => (
        <Port key={name} $out>
          {name}
          <Grip $side="right" />
        </Port>
      ))}
    </Ports>
  </NodeBox>
);

const SliderNode = ({ s, id }: { s: SliderSpec; id: string }) => {
  const [value, setValue] = useState(s.value);
  const ratio = Number(value) / s.max;
  return (
    <NodeBox $x={s.x} $y={s.y} $w={s.w} $h={18} $tone={s.green ? "green" : "grey"}>
      <SliderName $w={s.label} htmlFor={id}>{s.name}</SliderName>
      <SliderBody $green={s.green}>
        <SliderTrack>
          <Ticks>
            {Array.from({ length: 10 }, (_, i) => (
              <Tick key={i} />
            ))}
          </Ticks>
          <Range id={id} type="range" min={0} max={s.max} step="any" value={value} onChange={(e) => setValue(e.target.value)} />
          <Value htmlFor={id} $before={ratio > 0.5} style={{ left: `${ratio * 100}%` }}>{value}</Value>
        </SliderTrack>
      </SliderBody>
      <Grip $side="right" />
    </NodeBox>
  );
};

const menus = ["File", "Edit", "View", "Display", "Solution", "Help"];
const tabs = ["Params", "Maths", "Sets", "Vector", "Curve", "Surface", "Mesh", "Intersect", "Transform", "Display", "Mosquito", "Kangaroo2", "EDIT"];

export default function App() {
  const [toggle, setToggle] = useState(false);
  return (
    <Window>
      <GlobalStyle />
      <Defs />
      <TitleBar>
        <Title>Grasshopper - poem-waveform</Title>
        <WindowButton aria-label="Minimize">
          <svg width="10" height="10" stroke="#000"><path d="M0 4.500h10" /></svg>
        </WindowButton>
        <WindowButton aria-label="Restore">
          <svg width="10" height="10" fill="none" stroke="#000"><path d="M.5 2.500h7v7h-7zM2.500 2.500v-2h7v7h-2" /></svg>
        </WindowButton>
        <WindowButton aria-label="Close">
          <svg width="10" height="10" stroke="#000"><path d="m0 0 10 10m0-10L0 10" /></svg>
        </WindowButton>
      </TitleBar>
      <MenuBar>
        {menus.map((m) => (
          <MenuItem key={m}>{m}</MenuItem>
        ))}
        <DocumentName>poem-waveform</DocumentName>
      </MenuBar>
      <Tabs role="tablist">
        {tabs.map((t, i) => (
          <Tab key={t} role="tab" aria-selected={i === 0} $active={i === 0}>{t}</Tab>
        ))}
      </Tabs>
      <Ribbon>
        {groups.map((g) => (
          <Group key={g.name}>
            <Sections>
              {g.sections.map((s, i) => (
                <Section key={i} $cols={s.cols}>
                  {s.tools.map((t) => (
                    <ToolButton key={t.name} aria-label={t.name}>{t.icon}</ToolButton>
                  ))}
                </Section>
              ))}
            </Sections>
            <GroupLabel>
              <GroupName>{g.name}</GroupName>
              <LabelArrow />
            </GroupLabel>
          </Group>
        ))}
      </Ribbon>
      <Editor>
        <Toolbar>
          <FileButton aria-label="Open"><OpenIcon /></FileButton>
          <FileButton aria-label="Save"><SaveIcon /></FileButton>
          <BarDivider $gap={3} />
          <ZoomBox>
            <ZoomSelect aria-label="Zoom" defaultValue="85%">
              <option>85%</option>
            </ZoomSelect>
            <ZoomArrow width="9" height="6" fill="none" stroke="#444"><path d="m.5.5 4 4 4-4" /></ZoomArrow>
          </ZoomBox>
          <BarButton aria-label="Zoom extents"><ExtentsIcon /></BarButton>
          <Caret aria-label="Zoom options" />
          <BarButton aria-label="Named views"><EyeIcon /></BarButton>
          <Caret aria-label="View options" />
          <BarButton aria-label="Sketch"><BrushIcon /></BarButton>
          <Spacer />
          <BarButton aria-label="No preview"><NoPreviewIcon /></BarButton>
          <BarButton aria-label="Wireframe preview"><WireTubeIcon /></BarButton>
          <BarButton aria-label="Shaded preview" $active><TubeIcon body="url(#red)" hole="#700" line="#600000" /></BarButton>
          <BarDivider $gap={7} />
          <BarButton aria-label="Preview selected"><SelectedTubeIcon /></BarButton>
          <DropButton aria-label="Preview colours"><HalfSphereIcon /></DropButton>
          <BarDivider $gap={3} />
          <DropButton aria-label="Mesh quality"><MeshSphereIcon /></DropButton>
          <Caret aria-label="Mesh options" />
        </Toolbar>
        <Canvas>
          <Plane>
            <Wires fill="none">
              <defs>
                <linearGradient id="live" gradientUnits="userSpaceOnUse" x1="207" y1="0" x2="560" y2="0">
                  <stop offset="0" stopColor="#74d11c" />
                  <stop offset="0.450" stopColor="#8cc554" />
                  <stop offset="1" stopColor="#a0ad8c" />
                </linearGradient>
              </defs>
              {itemWires.map((w, i) => <path key={i} d={curve(w)} stroke="#5a5855" strokeWidth="2.500" />)}
              {listWires.map((w, i) => (
                <g key={i}>
                  <path d={curve(w)} stroke="#5a5855" strokeWidth="4" />
                  <path d={curve(w)} stroke="#b5b2ab" strokeWidth="1.200" />
                </g>
              ))}
              {treeWires.map((w, i) => (
                <g key={i} strokeDasharray="8 7" strokeDashoffset="6" strokeLinecap="round">
                  <path d={curve(w)} stroke="#5a5855" strokeWidth="4.500" />
                  <path d={curve(w)} stroke="#b5b2ab" strokeWidth="1.600" />
                </g>
              ))}
              {selectedWires.map((w, i) => <path key={i} d={curve(w)} stroke="url(#live)" strokeWidth="2.500" />)}
            </Wires>
            <SnipGhost>
              <SnipIcon />
              Window Snip
            </SnipGhost>
            {params.map((p) => (
              <NodeBox key={p.name} $x={p.x} $y={p.y} $w={p.w} $h={18}>
                <Grip $side="left" />
                <ParamName>{p.name}</ParamName>
                <Grip $side="right" />
              </NodeBox>
            ))}
            <NodeBox $x={37} $y={334} $w={90} $h={20}>
              <ParamName>Toggle</ParamName>
              <ToggleButton aria-pressed={toggle} onClick={() => setToggle(!toggle)}>{toggle ? "True" : "False"}</ToggleButton>
              <Grip $side="right" />
            </NodeBox>
            {sliders.map((s, i) => <SliderNode key={i} s={s} id={`slider-${i}`} />)}
            {components.map((c, i) => <ComponentNode key={i} c={c} />)}
          </Plane>
          <SideHandle aria-label="Show side bar" />
          <Compass width="52" height="46" viewBox="0 0 52 46">
            <path d="M9 20C13 8 20 2 30 2" stroke="#000" strokeWidth="4" fill="none" />
            <path d="m0 13 6-3 3 2 3 5-6 1z" fill="#000" />
            <circle cx="31" cy="24" r="20.500" fill="#000" />
            <circle cx="31" cy="24" r="19.500" fill="#fff" />
            <circle cx="31" cy="24" r="18" fill="url(#knob)" />
            <path d="m34 6 7 3-5 5zM13 14l6 5-7 3zM49 27l-6 2 4 6zM28 43l-7-2 5-5z" fill="#fff" />
          </Compass>
        </Canvas>
      </Editor>
      <StatusBar>
        <StatusIcon />
        Save As successfully completed... (220 seconds ago)
        <Version>1.0.0006</Version>
      </StatusBar>
    </Window>
  );
}
